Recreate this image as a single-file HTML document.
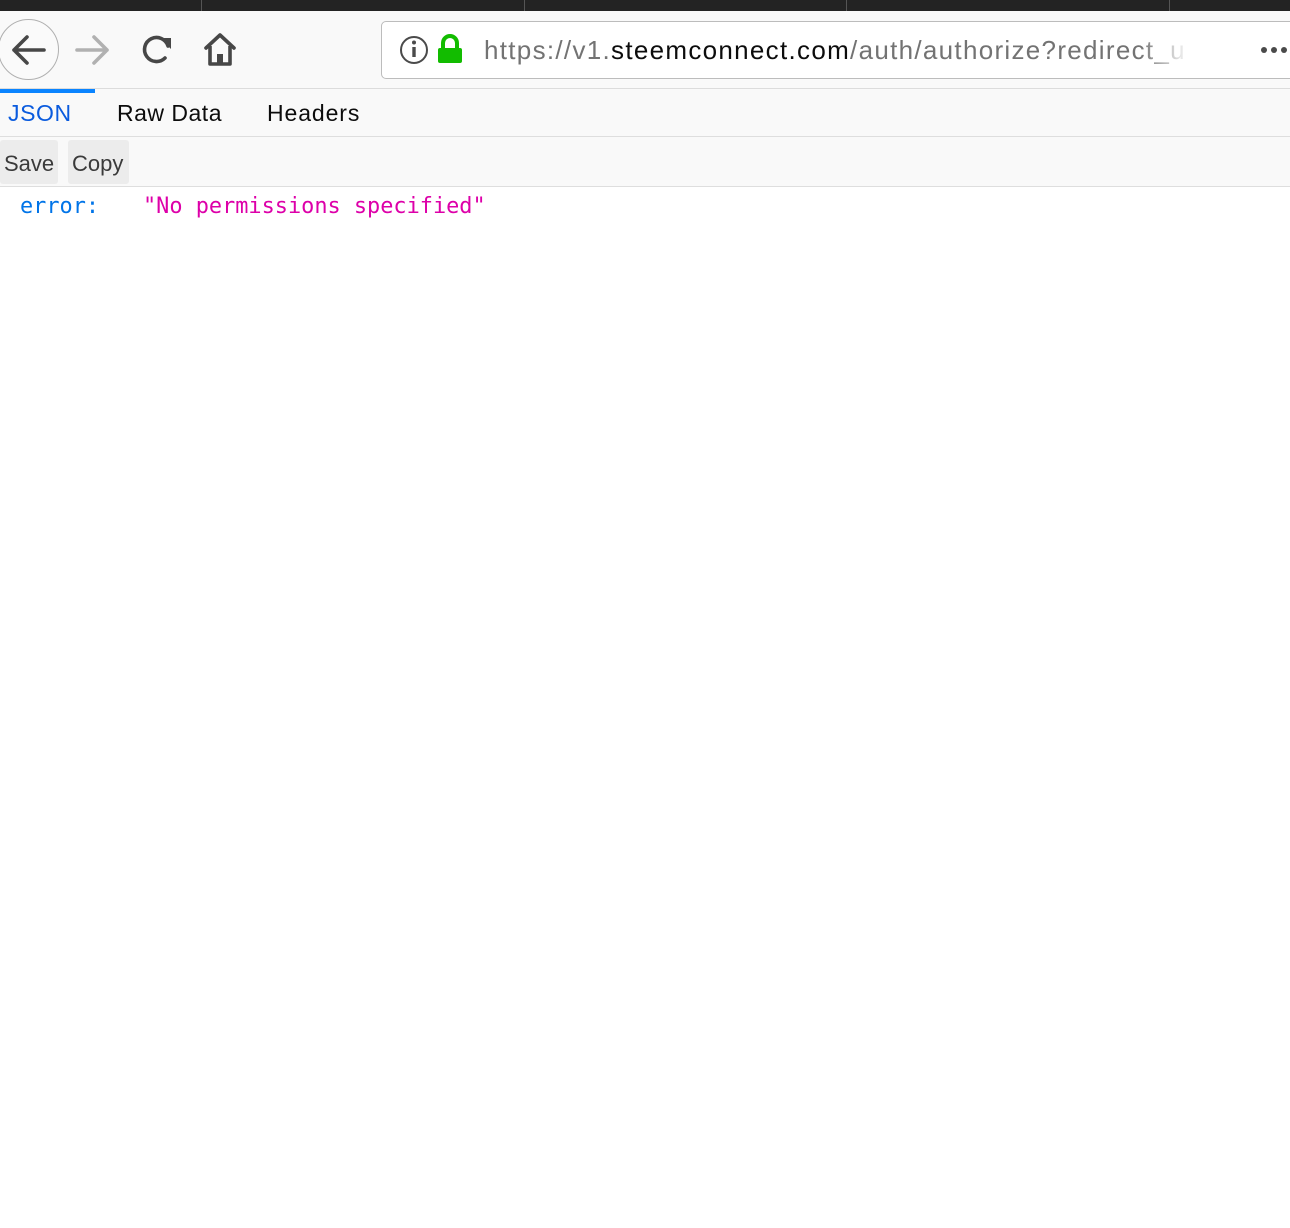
<!DOCTYPE html><html><head><style>
body{margin:0;width:1290px;height:1228px;background:#fff;font-family:"Liberation Sans",sans-serif;position:relative;overflow:hidden}
.a{position:absolute}
.m{font-family:'DejaVu Sans Mono','Liberation Mono',monospace;font-size:21.9px;white-space:pre}
</style></head><body>
<div class="a" style="left:0;top:0;width:1290px;height:11px;background:#232323"></div>
<div class="a" style="left:201px;top:0;width:1px;height:11px;background:#555"></div>
<div class="a" style="left:524px;top:0;width:1px;height:11px;background:#555"></div>
<div class="a" style="left:846px;top:0;width:1px;height:11px;background:#555"></div>
<div class="a" style="left:1169px;top:0;width:1px;height:11px;background:#555"></div>
<div class="a" style="left:0;top:11px;width:1290px;height:77px;background:#f9f9f9;border-bottom:1px solid #dcdcdc"></div>
<div class="a" style="left:-2px;top:19px;width:59px;height:59px;border:1px solid #b0b0b0;border-radius:50%;background:#fafafa"></div>
<svg class="a" style="left:0;top:0" width="380" height="88">
<path d="M44 50H14M27 37L14 50L27 63" stroke="#474747" stroke-width="3.6" fill="none" stroke-linecap="round" stroke-linejoin="round"/>
<path d="M77 50H107M94 37L107 50L94 63" stroke="#b1b1b1" stroke-width="3.6" fill="none" stroke-linecap="round" stroke-linejoin="round"/>
<path d="M168 46A12 12 0 1 0 165 58" stroke="#474747" stroke-width="3.6" fill="none" stroke-linecap="round"/>
<path d="M160 38H171V49Z" fill="#474747"/>
<path d="M206 48L220 35L234 48" stroke="#474747" stroke-width="3.6" fill="none" stroke-linecap="round" stroke-linejoin="round"/>
<path d="M210 46V64H230V46" stroke="#474747" stroke-width="3.6" fill="none" stroke-linejoin="round"/>
<rect x="217" y="54" width="6" height="10" fill="#474747"/>
</svg>
<div class="a" style="left:381px;top:21px;width:930px;height:56px;border:1px solid #bcbcbc;border-radius:5px;background:#fff"></div>
<svg class="a" style="left:395px;top:33px" width="80" height="34">
<circle cx="19" cy="17" r="13" stroke="#4a4a4a" stroke-width="2" fill="none"/>
<rect x="17.3" y="14" width="3.4" height="10" fill="#4a4a4a"/><circle cx="19" cy="9.5" r="2" fill="#4a4a4a"/>
<path d="M48 16V10A7 7 0 0 1 62 10V16" stroke="#12bc00" stroke-width="4" fill="none"/>
<rect x="43" y="15" width="24" height="15" rx="2" fill="#12bc00"/>
</svg>
<div class="a" style="left:484px;top:35px;font-size:26px;letter-spacing:1.3px;color:#737373;white-space:nowrap;width:705px;overflow:hidden">https://v1.<span style="color:#0c0c0c">steemconnect.com</span>/auth/authorize?redirect_u</div>
<div class="a" style="left:1140px;top:25px;width:50px;height:50px;background:linear-gradient(90deg,rgba(255,255,255,0),#fff)"></div>
<svg class="a" style="left:1258px;top:42px" width="32" height="16">
<circle cx="6" cy="8" r="3" fill="#4a4a4a"/><circle cx="16" cy="8" r="3" fill="#4a4a4a"/><circle cx="26" cy="8" r="3" fill="#4a4a4a"/>
</svg>
<div class="a" style="left:0;top:89px;width:1290px;height:47px;background:#f9f9f9;border-bottom:1px solid #dedede"></div>
<div class="a" style="left:0;top:89px;width:95px;height:4px;background:#0a84ff"></div>
<div class="a" style="left:8px;top:100px;font-size:23px;letter-spacing:0.6px;color:#0a5bde">JSON</div>
<div class="a" style="left:117px;top:100px;font-size:23px;letter-spacing:0.5px;color:#0c0c0c">Raw Data</div>
<div class="a" style="left:267px;top:100px;font-size:23px;letter-spacing:0.9px;color:#0c0c0c">Headers</div>
<div class="a" style="left:0;top:137px;width:1290px;height:49px;background:#f9f9f9;border-bottom:1px solid #dedede"></div>
<div class="a" style="left:0;top:140px;width:58px;height:44px;background:#ececec;border-radius:3px"></div>
<div class="a" style="left:68px;top:140px;width:61px;height:44px;background:#ececec;border-radius:3px"></div>
<div class="a" style="left:4px;top:151px;font-size:22px;color:#3a3a3a">Save</div>
<div class="a" style="left:72px;top:151px;font-size:22px;color:#3a3a3a">Copy</div>
<div class="a m" style="left:20px;top:194px;color:#0074e8">error:</div>
<div class="a m" style="left:143px;top:194px;color:#dd00a9">"No permissions specified"</div>
</body></html>
